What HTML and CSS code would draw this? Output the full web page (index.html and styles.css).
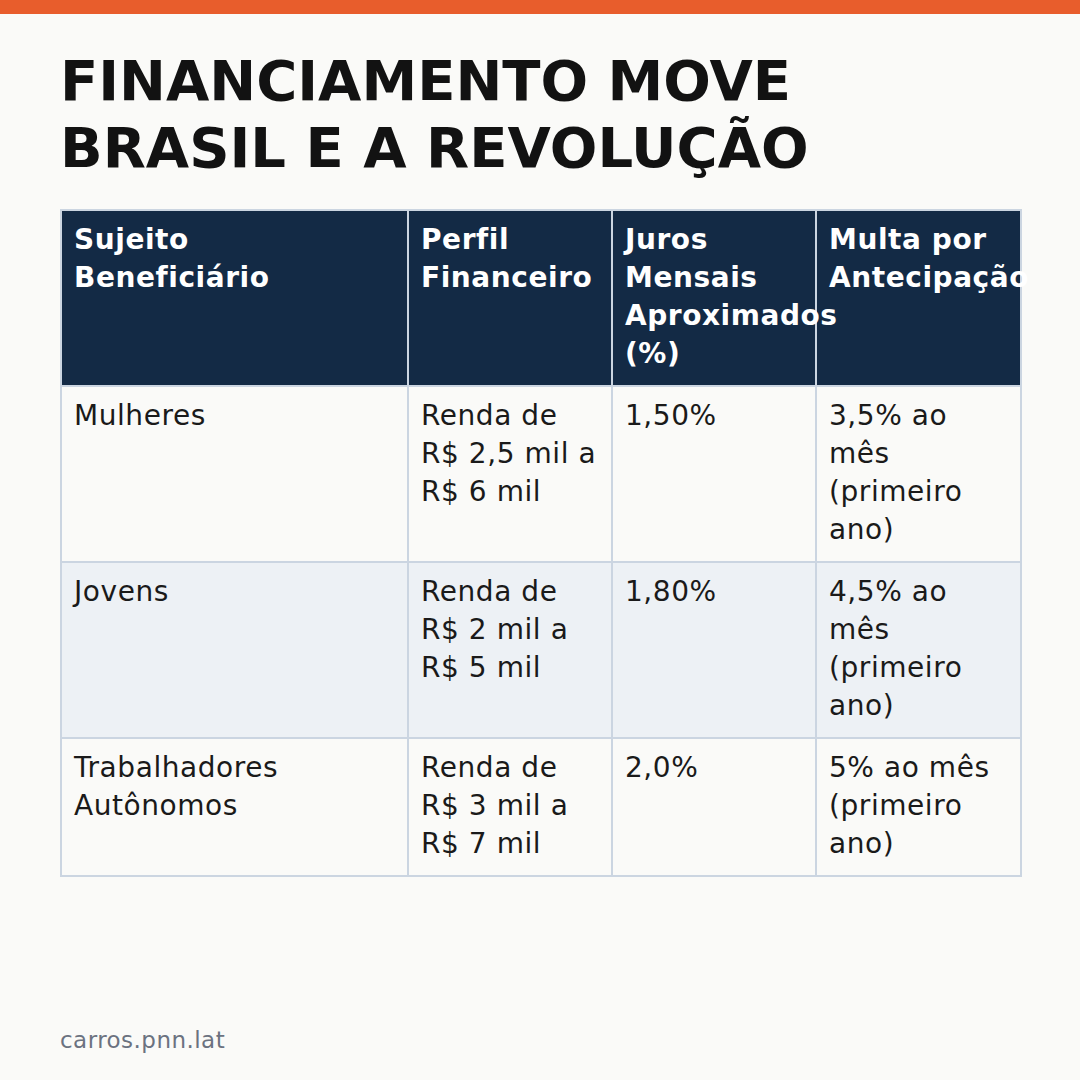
FILE: index.html
```html
<!DOCTYPE html>
<html lang="pt">
<head>
<meta charset="utf-8">
<title>Financiamento Move Brasil</title>
<link rel="stylesheet" href="styles.css">
</head>
<body>
<div class="page">
  <div class="topbar"></div>
  <main class="content">
    <h1 class="title">FINANCIAMENTO MOVE BRASIL E A REVOLUÇÃO</h1>
    <table class="grid">
      <colgroup>
        <col class="c1">
        <col class="c2">
        <col class="c3">
        <col class="c4">
      </colgroup>
      <thead>
        <tr>
          <th>Sujeito Beneficiário</th>
          <th>Perfil Financeiro</th>
          <th>Juros Mensais Aproximados (%)</th>
          <th>Multa por Antecipação</th>
        </tr>
      </thead>
      <tbody>
        <tr>
          <td>Mulheres</td>
          <td>Renda de R$&nbsp;2,5 mil a R$&nbsp;6 mil</td>
          <td>1,50%</td>
          <td>3,5% ao mês (primeiro ano)</td>
        </tr>
        <tr>
          <td>Jovens</td>
          <td>Renda de R$&nbsp;2 mil a R$&nbsp;5 mil</td>
          <td>1,80%</td>
          <td>4,5% ao mês (primeiro ano)</td>
        </tr>
        <tr>
          <td>Trabalhadores Autônomos</td>
          <td>Renda de R$&nbsp;3 mil a R$&nbsp;7 mil</td>
          <td>2,0%</td>
          <td>5% ao mês (primeiro ano)</td>
        </tr>
      </tbody>
    </table>
  </main>
  <footer class="footer">carros.pnn.lat</footer>
</div>
</body>
</html>
```

FILE: styles.css
```css
* { box-sizing: border-box; }

html, body {
  margin: 0;
  padding: 0;
  background: #fafaf8;
}

body {
  font-family: "DejaVu Sans", Verdana, sans-serif;
  color: #1a1a1a;
}

.page {
  width: 1080px;
  height: 1080px;
  display: flex;
  flex-direction: column;
}

.topbar {
  height: 14px;
  background: #e85d2c;
  flex: none;
}

.content {
  flex: 1;
  padding: 33px 60px 0 60px;
}

.title {
  margin: 0 0 28px 0;
  font-size: 56px;
  line-height: 67px;
  font-weight: 700;
  color: #121212;
  max-width: 800px;
}

.grid {
  width: 960px;
  border-collapse: collapse;
  table-layout: fixed;
  font-size: 28px;
  line-height: 38px;
  letter-spacing: 0.02em;
}

.c1 { width: 347px; }
.c2 { width: 204px; }
.c3 { width: 204px; }
.c4 { width: 205px; }

.grid th,
.grid td {
  border: 2px solid #cbd5e1;
  padding: 10px 10px 12px 12px;
  text-align: left;
  vertical-align: top;
}

.grid th:first-child {
  padding-right: 20px;
}

.grid th {
  background: #132a45;
  color: #ffffff;
  font-weight: 700;
}

.grid td {
  color: #1a1a1a;
  background: #fafaf8;
}

.grid tbody tr:nth-child(even) td {
  background: #edf1f5;
}

.footer {
  flex: none;
  padding: 0 60px 26px 60px;
  font-size: 23px;
  line-height: 28px;
  letter-spacing: 0.02em;
  color: #6b7280;
}
```
